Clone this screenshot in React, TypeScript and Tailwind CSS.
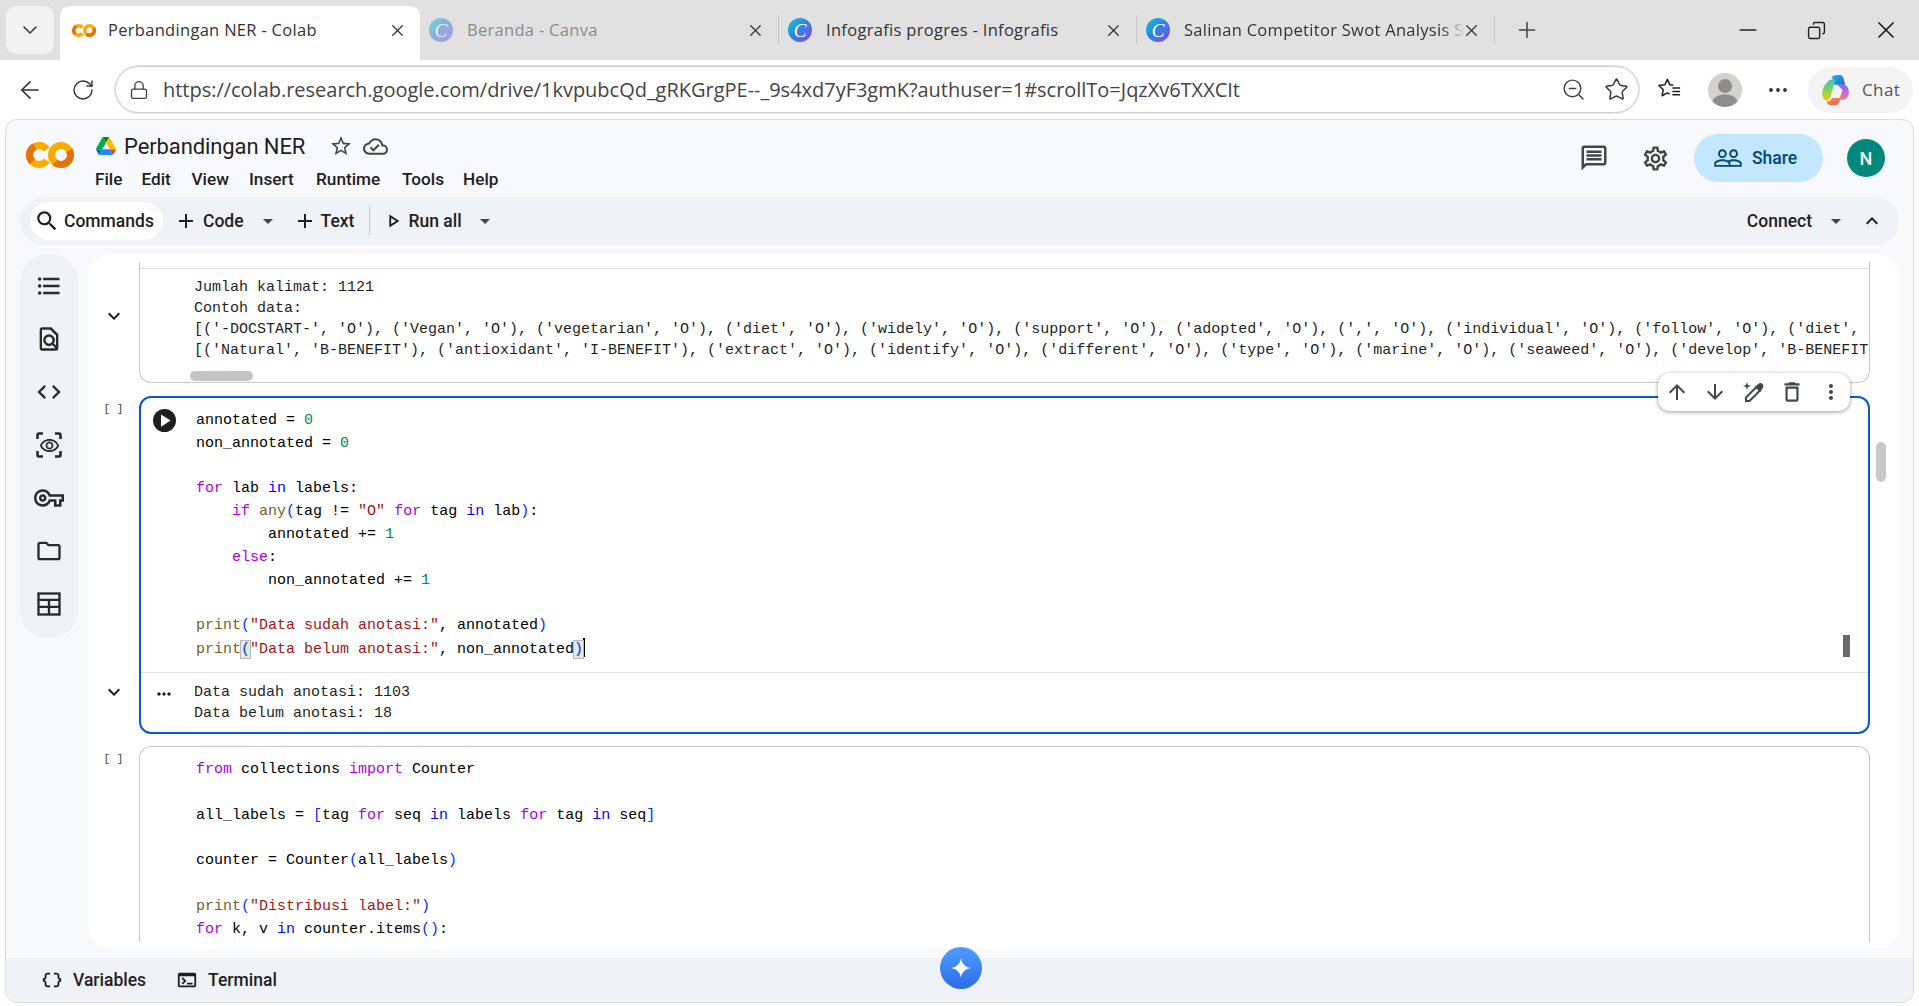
import { Minus, Plus, RotateCw, ArrowLeft, X, ChevronDown, Lock, ZoomOut, Star, MoreHorizontal, Copy } from "lucide-react";
import {
  MdSearch,
  MdAdd,
  MdArrowDropDown,
  MdExpandLess,
  MdExpandMore,
  MdFormatListBulleted,
  MdOutlineFindInPage,
  MdCode,
  MdOutlineVpnKey,
  MdOutlineFolder,
  MdOutlineSettings,
  MdOutlineMessage,
  MdPeopleOutline,
  MdOutlineStarBorder,
  MdOutlineCloudDone,
  MdArrowUpward,
  MdArrowDownward,
  MdOutlineDelete,
  MdMoreVert,
  MdMoreHoriz,
  MdPlayArrow,
  MdOutlinePlayArrow,
  MdDataObject,
  MdTerminal,
  MdOutlineRemoveRedEye,
} from "react-icons/md";
import type { ReactNode } from "react";

const uiFont = "font-['Open_Sans',sans-serif]";
const colabFont = "font-['Roboto',sans-serif]";
const monoFont = "font-['Liberation_Mono',monospace]";

function ColabLogo({ className = "" }: { className?: string }) {
  return (
    <svg viewBox="0 0 48 26" className={className} fill="none" strokeWidth="7">
      <path d="M20.8 7.5 A9.5 9.5 0 1 0 20.8 18.5" stroke="#f9ab00" />
      <path d="M8.5 4.6 A9.5 9.5 0 0 0 6.3 19.7" stroke="#e8710a" />
      <circle cx="35" cy="13" r="9.5" stroke="#f9ab00" />
      <path d="M43.2 8.2 A9.5 9.5 0 0 1 28.9 20.3" stroke="#e8710a" />
    </svg>
  );
}

function DriveLogo() {
  return (
    <svg viewBox="0 0 87.3 78" className="w-[20px] h-[18px]">
      <path d="m6.6 66.85 3.85 6.65c.8 1.4 1.95 2.5 3.3 3.3l13.75-23.8h-27.5c0 1.55.4 3.1 1.2 4.5z" fill="#0066da" />
      <path d="m43.65 25-13.75-23.8c-1.35.8-2.5 1.9-3.3 3.3l-25.4 44a9.06 9.06 0 0 0 -1.2 4.5h27.5z" fill="#00ac47" />
      <path d="m73.55 76.8c1.35-.8 2.5-1.9 3.3-3.3l1.6-2.75 7.65-13.25c.8-1.4 1.2-2.95 1.2-4.5h-27.502l5.852 11.5z" fill="#ea4335" />
      <path d="m43.65 25 13.75-23.8c-1.35-.8-2.9-1.2-4.5-1.2h-18.5c-1.6 0-3.15.45-4.5 1.2z" fill="#00832d" />
      <path d="m59.8 53h-32.3l-13.75 23.8c1.35.8 2.9 1.2 4.5 1.2h50.8c1.6 0 3.15-.45 4.5-1.2z" fill="#2684fc" />
      <path d="m73.4 26.5-12.7-22c-.8-1.4-1.95-2.5-3.3-3.3l-13.75 23.8 16.15 28h27.45c0-1.55-.4-3.1-1.2-4.5z" fill="#ffba00" />
    </svg>
  );
}

function CanvaIcon({ faded = false }: { faded?: boolean }) {
  return (
    <div
      className={`w-[24px] h-[24px] shrink-0 rounded-full bg-gradient-to-br from-[#12c4d4] via-[#2f7fe0] to-[#7a3ce8] flex items-center justify-center text-white italic text-[19px] leading-none font-['Liberation_Serif',serif] ${
        faded ? "opacity-50" : ""
      }`}
    >
      C
    </div>
  );
}

function CopilotIcon() {
  return (
    <svg viewBox="0 0 32 36" className="w-[33px] h-[32px]">
      <defs>
        <linearGradient id="cpA" x1="0" y1="0" x2="1" y2="1">
          <stop offset="0" stopColor="#1fb6e8" />
          <stop offset="1" stopColor="#2a5fe0" />
        </linearGradient>
        <linearGradient id="cpB" x1="0" y1="0" x2="0" y2="1">
          <stop offset="0" stopColor="#38c6c0" />
          <stop offset="0.55" stopColor="#8fd14f" />
          <stop offset="1" stopColor="#f5c61d" />
        </linearGradient>
        <linearGradient id="cpC" x1="0" y1="0" x2="0" y2="1">
          <stop offset="0" stopColor="#7f6cf0" />
          <stop offset="0.6" stopColor="#d765c8" />
          <stop offset="1" stopColor="#f58a6a" />
        </linearGradient>
        <linearGradient id="cpD" x1="0" y1="0" x2="1" y2="1">
          <stop offset="0" stopColor="#f7a13a" />
          <stop offset="1" stopColor="#ee4a6a" />
        </linearGradient>
      </defs>
      <path d="M12 3 Q14 1 17 1 H21 Q24 1 25 5 L27 12 H14 Z" fill="url(#cpA)" />
      <path d="M7 9 Q9 6 13 6 H16 L10 27 Q9 30 6 30 Q1 29 1 22 Q1 15 7 9 Z" fill="url(#cpB)" />
      <path d="M18 12 H26 Q31 14 31 20 Q31 27 26 29 H20 L24 18 Z" fill="url(#cpC)" />
      <path d="M12 27 H22 L20 32 Q18 35 15 35 H10 Q7 35 6 31 Q10 31 12 27 Z" fill="url(#cpD)" />
    </svg>
  );
}

function ProfileIcon() {
  return (
    <svg viewBox="0 0 34 34" className="w-[34px] h-[34px]">
      <circle cx="17" cy="17" r="17" fill="#d3d2cf" />
      <circle cx="17" cy="13" r="7" fill="#8f8d89" />
      <path d="M4.5 28.5 C6 23.5 11 21.5 17 21.5 C23 21.5 28 23.5 29.5 28.5 A17 17 0 0 1 4.5 28.5 Z" fill="#8f8d89" />
    </svg>
  );
}

function FavouritesIcon() {
  return (
    <svg viewBox="0 0 26 26" className="w-[25px] h-[25px]" fill="none" stroke="#222" strokeWidth="1.6" strokeLinejoin="round">
      <path d="M17 8.5 L13.3 8 L10.8 2.5 L8.2 8 L2 8.8 L6.5 13.2 L5.3 19.5 L10.8 16.5 L13 17.7" />
      <path d="M16 11.5 H24 M16 15 H24 M16 18.5 H24" />
    </svg>
  );
}

function TableIcon() {
  return (
    <svg viewBox="0 0 24 24" className="w-[28px] h-[28px]" fill="none" stroke="#282a2c" strokeWidth="2">
      <rect x="3" y="3" width="18" height="18" />
      <path d="M3 8.5 H21 M3 14.5 H21 M12 8.5 V21" />
    </svg>
  );
}

function PenSpark() {
  return (
    <svg viewBox="0 0 24 24" className="w-[24px] h-[24px]" fill="none" stroke="#444746" strokeWidth="2">
      <path d="M5 21 V17.5 L15.5 7 L19 10.5 L8.5 21 Z" />
      <path d="M15.5 7 L18 4.5 Q19.5 3.5 20.5 4.5 L21 5 Q21.8 6.2 21 7.5 L19 10.5 Z" fill="#444746" />
      <path d="M6 2 L7 5 L10 6 L7 7 L6 10 L5 7 L2 6 L5 5 Z" fill="#444746" stroke="none" />
    </svg>
  );
}

function EyeScan() {
  return (
    <div className="relative w-[26px] h-[26px] flex items-center justify-center">
      <svg viewBox="0 0 26 26" className="absolute inset-0" fill="none" stroke="#282a2c" strokeWidth="2.6">
        <path d="M1.5 7 V3 Q1.5 1.5 3 1.5 H7 M19 1.5 H23 Q24.5 1.5 24.5 3 V7 M24.5 19 V23 Q24.5 24.5 23 24.5 H19 M7 24.5 H3 Q1.5 24.5 1.5 23 V19" />
      </svg>
      <MdOutlineRemoveRedEye className="text-[21px] text-[#282a2c]" />
    </div>
  );
}

function BrowserTab({
  title,
  width,
  icon,
  faded = false,
  fadeText = false,
}: {
  title: string;
  width: string;
  icon: ReactNode;
  faded?: boolean;
  fadeText?: boolean;
}) {
  return (
    <div className={`${width} h-[30px] border-r border-[#c9c9c9] flex items-center pl-[9px] pr-[13px] shrink-0`}>
      {icon}
      <span
        className={`ml-[14px] flex-1 whitespace-nowrap text-[16.5px] tracking-[0.3px] ${uiFont} ${
          faded ? "text-[#8b8b8b]" : "text-[#333333]"
        } ${fadeText ? "-mr-[8px] [mask-image:linear-gradient(to_right,black_90%,transparent_98%)]" : ""}`}
      >
        {title}
      </span>
      <X className="w-[19px] h-[19px] text-[#333] shrink-0" strokeWidth={1.6} />
    </div>
  );
}

function MenuItem({ label, className }: { label: string; className: string }) {
  return <span className={className}>{label}</span>;
}

function Kw({ children }: { children: ReactNode }) {
  return <span className="text-[#af00db]">{children}</span>;
}
function Op({ children }: { children: ReactNode }) {
  return <span className="text-[#0000ff]">{children}</span>;
}
function Num({ children }: { children: ReactNode }) {
  return <span className="text-[#098658]">{children}</span>;
}
function Str({ children }: { children: ReactNode }) {
  return <span className="text-[#a31515]">{children}</span>;
}
function Fn({ children }: { children: ReactNode }) {
  return <span className="text-[#795e26]">{children}</span>;
}
function Br({ children, match = false }: { children: ReactNode; match?: boolean }) {
  return <span className={`text-[#0431fa] ${match ? "bg-[#e4e8e2] outline outline-1 outline-[#b9b9b9]" : ""}`}>{children}</span>;
}

function Line({ children }: { children?: ReactNode }) {
  return <div className="h-[22.8px] leading-[22.8px] whitespace-pre">{children ?? " "}</div>;
}

function CountMark() {
  return <span className={`${monoFont} text-[11px] text-[#444] whitespace-pre`}>[ ]</span>;
}

export default function App() {
  return (
    <div className={`h-screen w-full overflow-hidden bg-white flex flex-col ${colabFont}`}>
      {/* browser tabs */}
      <div className="h-[60px] shrink-0 bg-[#e1e1e1] flex items-end pl-[6px] pr-[19px]">
        <div className="w-[48px] h-[48px] mb-[6px] mr-[6px] bg-[#f3f3f3] rounded-[10px] flex items-center justify-center shrink-0">
          <ChevronDown className="w-[24px] h-[24px] text-[#333]" strokeWidth={1.5} />
        </div>
        <div className="w-[360px] h-[54px] bg-white rounded-t-[10px] flex items-center pl-[12px] pr-[13px] pb-[6px] shrink-0">
          <ColabLogo className="w-[24px] h-[15px] shrink-0" />
          <span className={`ml-[12px] flex-1 whitespace-nowrap text-[16.5px] tracking-[0.3px] text-[#333333] ${uiFont}`}>
            Perbandingan NER - Colab
          </span>
          <X className="w-[19px] h-[19px] text-[#333] shrink-0" strokeWidth={1.6} />
        </div>
        <div className="flex items-center h-[54px] flex-1 pb-[6px]">
          <BrowserTab title="Beranda - Canva" width="w-[359px]" faded icon={<CanvaIcon faded />} />
          <BrowserTab title="Infografis progres - Infografis" width="w-[358px]" icon={<CanvaIcon />} />
          <BrowserTab title="Salinan Competitor Swot Analysis S" width="w-[358px]" fadeText icon={<CanvaIcon />} />
          <Plus className="w-[26px] h-[26px] ml-[19px] text-[#444]" strokeWidth={1.4} />
          <div className="ml-auto flex items-center gap-[46px]">
            <Minus className="w-[26px] h-[26px] text-[#222]" strokeWidth={1.6} />
            <Copy className="w-[19px] h-[19px] text-[#222] -scale-x-100" strokeWidth={1.8} />
            <X className="w-[28px] h-[28px] text-[#222]" strokeWidth={1.5} />
          </div>
        </div>
      </div>

      {/* address bar */}
      <div className="h-[59px] shrink-0 flex items-center pl-[16px] pr-[6px]">
        <ArrowLeft className="w-[28px] h-[28px] text-[#333]" strokeWidth={1.4} />
        <RotateCw className="w-[24px] h-[24px] text-[#333] ml-[27px]" strokeWidth={1.4} />
        <div className="ml-[20px] w-[1524px] h-[47px] rounded-full border border-[#cfcfcf] shadow-[0_0_0_1px_#e4e4e4] flex items-center pl-[13px] pr-[9px]">
          <Lock className="w-[20px] h-[20px] text-[#444]" strokeWidth={1.6} />
          <span className={`ml-[14px] text-[20px] text-[#444] whitespace-nowrap tracking-[-0.02px] ${uiFont}`}>
            https://colab.research.google.com/drive/1kvpubcQd_gRKGrgPE--_9s4xd7yF3gmK?authuser=1#scrollTo=JqzXv6TXXCIt
          </span>
          <ZoomOut className="ml-auto w-[25px] h-[25px] text-[#444]" strokeWidth={1.4} />
          <Star className="ml-[18px] w-[25px] h-[25px] text-[#333]" strokeWidth={1.4} />
        </div>
        <div className="ml-[18px]">
          <FavouritesIcon />
        </div>
        <div className="ml-[26px]">
          <ProfileIcon />
        </div>
        <MoreHorizontal className="ml-[24px] w-[24px] h-[24px] text-[#333]" strokeWidth={1.8} />
        <div className="ml-[18px] w-[105px] h-[46px] rounded-full bg-[#f4f4f4] flex items-center pl-[11px]">
          <CopilotIcon />
          <span className={`ml-[10px] text-[17px] tracking-[0.4px] text-[#555] ${uiFont}`}>Chat</span>
        </div>
      </div>

      {/* colab window */}
      <div className="flex-1 min-h-0 mx-[5px] mb-[3px] rounded-[12px] border border-[#dcdcdc] bg-[#f8f9fd] flex flex-col overflow-hidden">
        {/* header */}
        <div className="h-[77px] shrink-0 flex pl-[20px] pr-[28px]">
          <ColabLogo className="w-[48px] h-[26px] mt-[22px] shrink-0" />
          <div className="ml-[22px] mt-[14px]">
            <div className="flex items-center h-[24px]">
              <DriveLogo />
              <span className="ml-[8px] text-[22px] text-[#1f1f1f] tracking-[-0.1px]">Perbandingan NER</span>
              <MdOutlineStarBorder className="ml-[24px] text-[24px] text-[#444746]" />
              <MdOutlineCloudDone className="ml-[10px] text-[25px] text-[#444746]" />
            </div>
            <div className="flex items-center mt-[10px] h-[24px] text-[17.2px] font-medium text-[#1f1f1f] -ml-[1px]">
              <MenuItem label="File" className="w-[46.5px]" />
              <MenuItem label="Edit" className="w-[50px]" />
              <MenuItem label="View" className="w-[57.5px]" />
              <MenuItem label="Insert" className="w-[67px]" />
              <MenuItem label="Runtime" className="w-[86px]" />
              <MenuItem label="Tools" className="w-[61px]" />
              <MenuItem label="Help" className="" />
            </div>
          </div>
          <div className="ml-auto flex items-center self-start mt-[14px] h-[48px]">
            <MdOutlineMessage className="text-[30px] text-[#444746]" />
            <MdOutlineSettings className="ml-[32px] text-[29px] text-[#444746]" />
            <div className="ml-[24px] w-[129px] h-[48px] rounded-full bg-[#c2e7ff] flex items-center pl-[19px] text-[#004a77]">
              <MdPeopleOutline className="text-[30px]" />
              <span className="ml-[9px] text-[17.5px] font-medium">Share</span>
            </div>
            <div className="ml-[24px] w-[38px] h-[38px] rounded-full bg-[#00897b] text-white flex items-center justify-center text-[18px] font-medium">
              N
            </div>
          </div>
        </div>

        {/* toolbar */}
        <div className="h-[48px] shrink-0 ml-[14px] mr-[14px] rounded-full bg-[#eff2f7] flex items-center pl-[10px] pr-[15px] text-[17.5px] font-medium text-[#1f1f1f]">
          <div className="w-[133px] h-[38px] rounded-full bg-white flex items-center pl-[4px]">
            <MdSearch className="text-[26px] text-[#1f1f1f]" />
            <span className="ml-[4px]">Commands</span>
          </div>
          <MdAdd className="ml-[11px] text-[24px]" />
          <span className="ml-[5px]">Code</span>
          <MdArrowDropDown className="ml-[12px] text-[24px] text-[#444746]" />
          <MdAdd className="ml-[13px] text-[24px]" />
          <span className="ml-[4px]">Text</span>
          <div className="ml-[15px] w-px h-[28px] bg-[#c7c9cc]" />
          <MdOutlinePlayArrow className="ml-[12px] text-[22px] text-[#1f1f1f]" />
          <span className="ml-[4px]">Run all</span>
          <MdArrowDropDown className="ml-[11px] text-[24px] text-[#444746]" />
          <span className="ml-auto">Connect</span>
          <MdArrowDropDown className="ml-[12px] text-[24px] text-[#444746]" />
          <MdExpandLess className="ml-[12px] text-[24px] text-[#1f1f1f]" />
        </div>

        {/* body */}
        <div className="flex-1 min-h-0 flex mt-[9px]">
          <div className="w-[58px] h-[384px] ml-[14px] shrink-0 rounded-[28px] bg-[#eff2f7] flex flex-col items-center text-[#282a2c] pt-[15px] gap-[19px]">
            <MdFormatListBulleted className="text-[28px] h-[34px]" />
            <MdOutlineFindInPage className="text-[28px] h-[34px]" />
            <MdCode className="text-[28px] h-[34px]" />
            <div className="h-[34px] flex items-center"><EyeScan /></div>
            <MdOutlineVpnKey className="text-[30px] h-[34px]" />
            <MdOutlineFolder className="text-[28px] h-[34px]" />
            <div className="h-[34px] flex items-center"><TableIcon /></div>
          </div>

          {/* notebook */}
          <div className={`relative ml-[10px] w-[1812px] h-[695px] rounded-[24px] bg-white overflow-hidden shrink-0 text-[15px] text-black ${monoFont}`}>
            {/* previous cell output */}
            <div className="flex h-[129px]">
              <div className="w-[51px] shrink-0 flex justify-center items-start pt-[50px]">
                <MdExpandMore className="text-[24px] text-[#1f1f1f] ml-[1px]" />
              </div>
              <div className="relative mt-[8px] w-[1731px] h-[121px] border-x border-b border-[#c7c7c7] rounded-b-[12px] overflow-hidden pt-[6px]">
                <div className="border-t border-[#e3e3e3] pl-[54px] pt-[8px] text-[#1f1f1f]">
                  <div className="h-[21px] leading-[21px] whitespace-pre">Jumlah kalimat: 1121</div>
                  <div className="h-[21px] leading-[21px] whitespace-pre">Contoh data:</div>
                  <div className="h-[21px] leading-[21px] whitespace-pre">{"[('-DOCSTART-', 'O'), ('Vegan', 'O'), ('vegetarian', 'O'), ('diet', 'O'), ('widely', 'O'), ('support', 'O'), ('adopted', 'O'), (',', 'O'), ('individual', 'O'), ('follow', 'O'), ('diet',"}</div>
                  <div className="h-[21px] leading-[21px] whitespace-pre">{"[('Natural', 'B-BENEFIT'), ('antioxidant', 'I-BENEFIT'), ('extract', 'O'), ('identify', 'O'), ('different', 'O'), ('type', 'O'), ('marine', 'O'), ('seaweed', 'O'), ('develop', 'B-BENEFIT"}</div>
                </div>
                <div className="absolute left-[50px] bottom-[1px] w-[63px] h-[10px] rounded-full bg-[#c4c4c4]" />
              </div>
            </div>

            {/* active cell */}
            <div className="flex mt-[13px]">
              <div className="w-[51px] shrink-0 flex flex-col items-center pt-[5px]">
                <CountMark />
              </div>
              <div className="relative w-[1731px] h-[338px] rounded-[12px] border-2 border-[#0b57d0] flex flex-col">
                <div className="relative h-[275px] pl-[55px] pt-[12px] border-b border-[#e3e3e3]">
                  <div className="absolute left-[12px] top-[11px] w-[23px] h-[23px] rounded-full bg-[#1f1f1f] flex items-center justify-center">
                    <MdPlayArrow className="text-[21px] text-white" />
                  </div>
                  <Line>annotated = <Num>0</Num></Line>
                  <Line>non_annotated = <Num>0</Num></Line>
                  <Line />
                  <Line><Kw>for</Kw> lab <Op>in</Op> labels:</Line>
                  <Line>    <Kw>if</Kw> <Fn>any</Fn><Br>(</Br>tag != <Str>"O"</Str> <Kw>for</Kw> tag <Op>in</Op> lab<Br>)</Br>:</Line>
                  <Line>        annotated += <Num>1</Num></Line>
                  <Line>    <Kw>else</Kw>:</Line>
                  <Line>        non_annotated += <Num>1</Num></Line>
                  <Line />
                  <Line><Fn>print</Fn><Br>(</Br><Str>"Data sudah anotasi:"</Str>, annotated<Br>)</Br></Line>
                  <Line>
                    <Fn>print</Fn><Br match>(</Br><Str>"Data belum anotasi:"</Str>, non_annotated<Br match>)</Br>
                    <span className="inline-block w-[2px] h-[19px] bg-black align-[-4px]" />
                  </Line>
                  <div className="absolute right-[18px] top-[237px] w-[7px] h-[22px] bg-[#6a6a6a]" />
                </div>
                <div className="flex pt-[10px] text-[#1f1f1f]">
                  <div className="w-[53px] pl-[13px]">
                    <MdMoreHoriz className="text-[20px] text-[#1f1f1f] mt-[1px]" />
                  </div>
                  <div>
                    <div className="h-[20.5px] leading-[20.5px] whitespace-pre">Data sudah anotasi: 1103</div>
                    <div className="h-[20.5px] leading-[20.5px] whitespace-pre">Data belum anotasi: 18</div>
                  </div>
                </div>
                {/* cell toolbar */}
                <div className={`absolute -top-[25px] right-[18px] w-[192px] h-[38px] rounded-[12px] bg-white shadow-[0_1px_4px_rgba(0,0,0,0.4)] flex items-center justify-between pl-[7px] pr-[7px] text-[#444746] ${colabFont}`}>
                  <MdArrowUpward className="text-[24px]" />
                  <MdArrowDownward className="text-[24px]" />
                  <PenSpark />
                  <MdOutlineDelete className="text-[26px]" />
                  <MdMoreVert className="text-[24px]" />
                </div>
              </div>
            </div>

            {/* next cell */}
            <div className="flex mt-[12px]">
              <div className="w-[51px] shrink-0 flex flex-col items-center pt-[5px]">
                <CountMark />
              </div>
              <div className="w-[1731px] h-[196px] rounded-t-[12px] border-x border-t border-[#c7c7c7] pl-[56px] pt-[12px] overflow-hidden">
                <Line><Kw>from</Kw> collections <Kw>import</Kw> Counter</Line>
                <Line />
                <Line>all_labels = <Br>[</Br>tag <Kw>for</Kw> seq <Op>in</Op> labels <Kw>for</Kw> tag <Op>in</Op> seq<Br>]</Br></Line>
                <Line />
                <Line>counter = Counter<Br>(</Br>all_labels<Br>)</Br></Line>
                <Line />
                <Line><Fn>print</Fn><Br>(</Br><Str>"Distribusi label:"</Str><Br>)</Br></Line>
                <Line><Kw>for</Kw> k, v <Op>in</Op> counter.items<Br>()</Br>:</Line>
              </div>
            </div>

            {/* notebook scrollbar */}
            <div className="absolute left-[1788px] top-[188px] w-[10px] h-[40px] rounded-full bg-[#c8c8c8]" />
            {/* expand chevron of the active output */}
            <MdExpandMore className="absolute left-[14px] top-[426px] text-[24px] text-[#1f1f1f]" />
          </div>
        </div>

        {/* status bar */}
        <div className="relative h-[44px] shrink-0 bg-[#eff2f7] flex items-center pl-[35px] text-[17.5px] font-medium text-[#1f1f1f]">
          <MdDataObject className="text-[22px]" />
          <span className="ml-[10px]">Variables</span>
          <MdTerminal className="ml-[30px] text-[22px]" />
          <span className="ml-[10px]">Terminal</span>
          <div className="absolute left-[934px] -top-[11px] w-[42px] h-[42px] rounded-full bg-gradient-to-b from-[#4f9dff] to-[#2f6be6] flex items-center justify-center">
            <svg viewBox="0 0 24 24" className="w-[24px] h-[24px]" fill="white">
              <path d="M12 2 C12.6 7.5 16.5 11.4 22 12 C16.5 12.6 12.6 16.5 12 22 C11.4 16.5 7.5 12.6 2 12 C7.5 11.4 11.4 7.5 12 2 Z" />
            </svg>
          </div>
        </div>
      </div>
    </div>
  );
}
